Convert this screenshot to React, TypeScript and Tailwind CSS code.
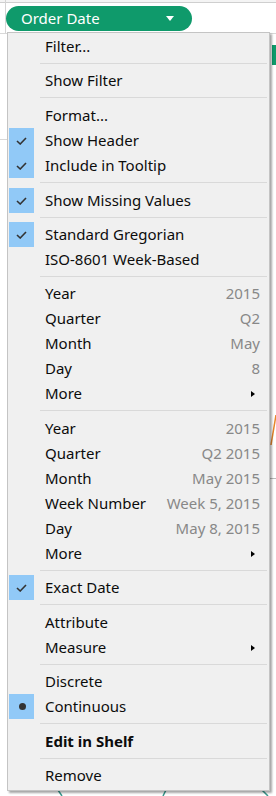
import React from 'react';

type Item =
  | { kind: 'sep'; h: number }
  | {
      kind: 'row';
      label: string;
      value?: string;
      checked?: boolean;
      dot?: boolean;
      sub?: boolean;
      bold?: boolean;
    };

const items: Item[] = [
  { kind: 'row', label: 'Filter...' },
  { kind: 'sep', h: 9 },
  { kind: 'row', label: 'Show Filter' },
  { kind: 'sep', h: 10 },
  { kind: 'row', label: 'Format...' },
  { kind: 'row', label: 'Show Header', checked: true },
  { kind: 'row', label: 'Include in Tooltip', checked: true },
  { kind: 'sep', h: 10 },
  { kind: 'row', label: 'Show Missing Values', checked: true },
  { kind: 'sep', h: 9 },
  { kind: 'row', label: 'Standard Gregorian', checked: true },
  { kind: 'row', label: 'ISO-8601 Week-Based' },
  { kind: 'sep', h: 9 },
  { kind: 'row', label: 'Year', value: '2015' },
  { kind: 'row', label: 'Quarter', value: 'Q2' },
  { kind: 'row', label: 'Month', value: 'May' },
  { kind: 'row', label: 'Day', value: '8' },
  { kind: 'row', label: 'More', sub: true },
  { kind: 'sep', h: 10 },
  { kind: 'row', label: 'Year', value: '2015' },
  { kind: 'row', label: 'Quarter', value: 'Q2 2015' },
  { kind: 'row', label: 'Month', value: 'May 2015' },
  { kind: 'row', label: 'Week Number', value: 'Week 5, 2015' },
  { kind: 'row', label: 'Day', value: 'May 8, 2015' },
  { kind: 'row', label: 'More', sub: true },
  { kind: 'sep', h: 9 },
  { kind: 'row', label: 'Exact Date', checked: true },
  { kind: 'sep', h: 10 },
  { kind: 'row', label: 'Attribute' },
  { kind: 'row', label: 'Measure', sub: true },
  { kind: 'sep', h: 9 },
  { kind: 'row', label: 'Discrete' },
  { kind: 'row', label: 'Continuous', dot: true },
  { kind: 'sep', h: 10 },
  { kind: 'row', label: 'Edit in Shelf', bold: true },
  { kind: 'sep', h: 9 },
  { kind: 'row', label: 'Remove' },
];

const CheckIcon = () => (
  <svg width="11" height="8" viewBox="0 0 11 8" fill="none">
    <path d="M1 4l3.2 3L10 1" stroke="#333" strokeWidth="1.6" />
  </svg>
);

const MenuRow: React.FC<{ item: Extract<Item, { kind: 'row' }> }> = ({ item }) => (
  <div className="flex h-[25px] items-center">
    <div
      className={`ml-[1px] flex h-[25px] w-[25px] shrink-0 items-center justify-center ${
        item.checked || item.dot ? 'bg-[#91c9f7]' : ''
      }`}
    >
      {item.checked && <CheckIcon />}
      {item.dot && <span className="ml-[1px] block h-[7px] w-[7px] rounded-full bg-[#333]" />}
    </div>
    <span className={`ml-[11px] flex-1 whitespace-nowrap ${item.bold ? 'font-bold' : ''}`}>{item.label}</span>
    {item.value && <span className="mr-[9px] whitespace-nowrap text-[#888]">{item.value}</span>}
    {item.sub && (
      <span className="mr-[14px] h-0 w-0 border-y-[3.5px] border-l-[4px] border-y-transparent border-l-black" />
    )}
  </div>
);

export default function App() {
  return (
    <div
      className="relative h-[796px] w-[276px] overflow-hidden bg-white text-[15px] text-[#0c0c0c]"
      style={{ fontFamily: '"Noto Sans", "Open Sans", sans-serif' }}
    >
      {/* background sheet bits */}
      <div className="absolute left-0 top-0 h-[2px] w-full bg-[#f4f4f4]" />
      <div className="absolute left-0 top-[2px] h-px w-full bg-[#cfcfcf]" />
      <div className="absolute left-[5px] top-0 h-[33px] w-px bg-[#d4d4d4]" />
      <div className="absolute left-0 top-[33px] h-px w-full bg-[#d8d8d8]" />
      <div className="absolute left-0 top-[139px] h-px w-[8px] bg-[#d8d8d8]" />
      <div className="absolute right-0 top-[45px] h-[20px] w-[4px] bg-[#0f9a6b]" />
      <div className="absolute right-0 top-[478px] h-px w-[6px] border-t border-dashed border-[#bbb]" />
      <svg className="absolute right-0 top-[415px]" width="6" height="40" viewBox="0 0 6 40">
        <path d="M6 0L1 30" stroke="#e8862a" strokeWidth="1.5" fill="none" />
      </svg>
      <svg className="absolute bottom-0 left-0" width="276" height="6" viewBox="0 0 276 6">
        <path d="M58 0l4 6M166 0l-3 6M262 0l6 6" stroke="#3a9a8e" strokeWidth="1.5" fill="none" />
      </svg>

      <div className="relative pt-[6px]">
        {/* pill */}
        <div className="ml-[6px] flex h-[25px] w-[186px] items-center rounded-full bg-[#0f9a6b] pl-[15px] pr-[18px] text-white">
          <span className="flex-1 text-[15px] leading-none">Order Date</span>
          <span className="h-0 w-0 border-x-[4.5px] border-t-[5px] border-x-transparent border-t-white" />
        </div>

        {/* menu */}
        <div className="ml-[7px] mt-[1px] w-[263px] border border-[#c4c4c4] bg-[#f0f0f0] pb-[2px] pt-[1px] shadow-[2px_2px_2px_rgba(0,0,0,0.35)]">
          {items.map((item, i) =>
            item.kind === 'sep' ? (
              <div key={i} className={`pt-[4px] ${item.h === 9 ? 'h-[9px]' : 'h-[10px]'}`}>
                <div className="ml-[32px] mr-[2px] h-px bg-[#d9d9d9]" />
              </div>
            ) : (
              <MenuRow key={i} item={item} />
            )
          )}
        </div>
      </div>
    </div>
  );
}
